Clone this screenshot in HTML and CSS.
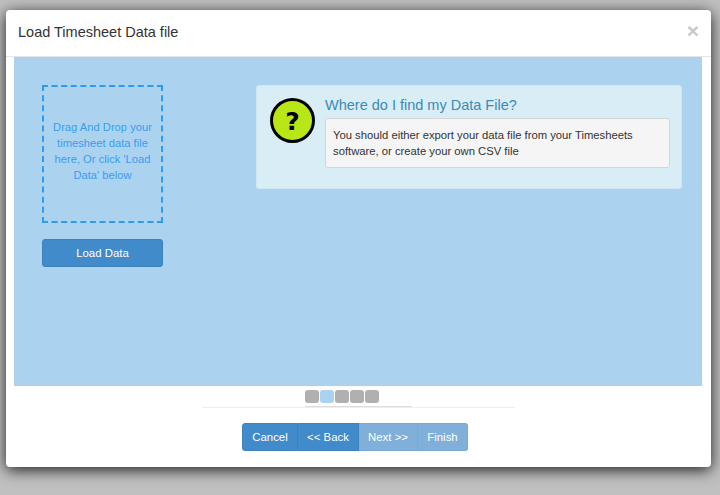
FILE: index.html
```html
<!DOCTYPE html>
<html lang="en">

<head>
    <meta charset="UTF-8">
    <title>Load Timesheet Data file</title>
    <link rel="stylesheet" href="styles.css">
</head>

<body>

    <section class="modal">
        <header class="modal-head">
            <h4>Load Timesheet Data file</h4>
            <span class="close">×</span>
        </header>

        <div class="modal-body">
            <div class="left">
                <div class="drop">Drag And Drop your timesheet data file here, Or click 'Load Data' below</div>
                <button class="load" type="button">Load Data</button>
            </div>

            <div class="help">
                <div class="help-icon">?</div>
                <div class="help-text">
                    <h5>Where do I find my Data File?</h5>
                    <div class="well">You should either export your data file from your Timesheets software, or create your own CSV file</div>
                </div>
            </div>
        </div>

        <footer class="modal-foot">
            <div class="steps">
                <i></i>
                <i class="on"></i>
                <i></i>
                <i></i>
                <i></i>
            </div>
            <hr />
            <div class="btns">
                <button class="cancel" type="button">Cancel</button>
                <button class="back" type="button">&lt;&lt; Back</button>
                <button class="next off" type="button">Next &gt;&gt;</button>
                <button class="finish off" type="button">Finish</button>
            </div>
        </footer>
    </section>

</body>

</html>
```

FILE: styles.css
```css
* { box-sizing: border-box; }
html, body { height: 100%; }
body { margin: 0; padding: 10px 9px 28px 6px; background: #c0c0c0; font-family: "Liberation Sans", Arial, sans-serif; overflow: hidden; }

.modal { display: flex; flex-direction: column; height: 457px; background: #fff; border-radius: 4px; box-shadow: 0 3px 15px rgba(0, 0, 0, .85); }

.modal-head { display: flex; justify-content: space-between; align-items: center; flex: none; height: 47px; padding: 0 12px 2px; border-bottom: 1px solid #e5e5e5; }
.modal-head h4 { margin: 0; font-size: 14.5px; font-weight: normal; color: #333; }
.modal-head .close { margin-bottom: 4px; font-size: 21px; font-weight: bold; line-height: 1; color: #c9c9c9; }

.modal-body { display: flex; flex: none; height: 329px; margin: 0 9px 0 8px; padding: 28px 20px 0 28px; background: #abd3f0; }

.left { flex: none; width: 121px; }
.drop { display: flex; align-items: center; height: 138px; padding: 0 8px 6px; border: 2px dashed #2e9bf0; font-size: 11.2px; line-height: 16px; text-align: center; color: #3a9cf0; }
.load { display: block; width: 100%; height: 28px; margin-top: 16px; padding: 0; font: 11.4px "Liberation Sans", Arial, sans-serif; color: #fff; background: #428bca; border: 1px solid #3d81bd; border-radius: 3px; }

.help { display: flex; align-items: flex-start; flex: none; width: 426px; height: 104px; margin-left: 93px; padding: 12px 11px 0 13px; background: #d9edf7; border: 1px solid #cfe6f3; border-radius: 3px; }
.help-icon { flex: none; width: 45px; height: 45px; border: 3px solid #000; border-radius: 50%; background: #b9e617; font: bold 25px/41px "DejaVu Sans", sans-serif; text-align: center; color: #000; }
.help-text { flex: 1; margin-left: 10px; }
.help-text h5 { margin: -3px 0 3px; font-size: 14.5px; line-height: 20px; font-weight: normal; color: #3b8bb5; }
.well { height: 50px; padding: 8px 7px; font-size: 11.25px; line-height: 16px; color: #333; background: #f5f5f5; border: 1px solid #d5d5d5; border-radius: 3px; }

.modal-foot { display: flex; flex-direction: column; align-items: center; flex: 1; padding-top: 4px; }
.steps { display: flex; gap: 1px; width: 107px; height: 17px; border-bottom: 1px solid #ddd; }
.steps i { width: 14px; height: 13px; background: #b0b0b0; border-radius: 3px; }
.steps i.on { background: #abd3f0; }
.modal-foot hr { width: 313px; height: 1px; margin: 0 0 15px; border: 0; background: #eee; }

.btns { display: flex; height: 28px; margin-right: 7px; }
.btns button { height: 28px; padding: 0; font: 11.4px "Liberation Sans", Arial, sans-serif; color: #fff; background: #428bca; border: 1px solid #3d81bd; border-left-width: 0; }
.btns .cancel { width: 56px; border-left-width: 1px; border-radius: 3px 0 0 3px; }
.btns .back { width: 61px; }
.btns .next { width: 59px; }
.btns .finish { width: 50px; border-radius: 0 3px 3px 0; }
.btns .off { background: #80b0da; border-color: #79a9d5; }
```
